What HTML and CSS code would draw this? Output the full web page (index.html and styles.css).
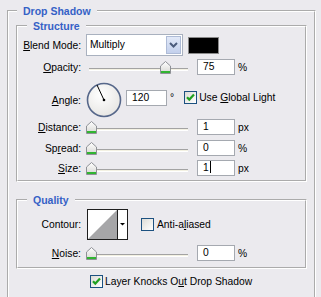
FILE: index.html
```html
<!DOCTYPE html>
<html lang="en">

<head>
	<meta charset="UTF-8">
	<title>Drop Shadow</title>
	<link rel="stylesheet" href="styles.css">
</head>

<body>
	<svg class="sprite" width="0" height="0">
		<defs>
			<linearGradient id="thumb-fill" x1="0" y1="0" x2="0" y2="1">
				<stop offset="0" stop-color="#ffffff" />
				<stop offset="1" stop-color="#d6d6d2" />
			</linearGradient>
			<radialGradient id="dial-fill" cx="0.4" cy="0.35" r="0.7">
				<stop offset="0" stop-color="#ffffff" />
				<stop offset="1" stop-color="#e6e5e2" />
			</radialGradient>
			<symbol id="thumb" viewBox="0 0 11 13">
				<path d="M0.5 5 L5.5 0.5 L10.5 5 L10.5 12.5 L0.5 12.5 Z" fill="url(#thumb-fill)" stroke="#8e9196" />
				<rect x="1" y="10" width="9" height="2" fill="#31b531" />
			</symbol>
			<symbol id="tick" viewBox="0 0 11 11">
				<path d="M2 5.2 L4.3 7.6 L9 2.6" fill="none" stroke="#21a121" stroke-width="2.2" />
			</symbol>
		</defs>
	</svg>

	<fieldset class="group outer">
		<legend>Drop Shadow</legend>
		<div class="outer-body">

			<fieldset class="group section structure">
				<legend>Structure</legend>

				<div class="row blend">
					<span class="lbl"><u>B</u>lend Mode:</span>
					<div class="select">
						<span class="select-value">Multiply</span>
						<span class="select-btn">
							<svg width="9" height="6" viewBox="0 0 9 6">
								<path d="M1 1 L4.5 4.5 L8 1" fill="none" stroke="#4c5c7c" stroke-width="2" />
							</svg>
						</span>
					</div>
					<span class="swatch"></span>
				</div>

				<div class="row opacity">
					<span class="lbl"><u>O</u>pacity:</span>
					<div class="slider">
						<span class="track"></span>
						<svg class="thumb" style="left:74px" width="11" height="13"><use href="#thumb" /></svg>
					</div>
					<span class="field">75</span>
					<span class="unit">%</span>
				</div>

				<div class="row angle">
					<span class="lbl"><u>A</u>ngle:</span>
					<svg class="dial" width="36" height="36" viewBox="0 0 36 36">
						<circle cx="18" cy="18" r="16.5" fill="url(#dial-fill)" stroke="#56678a" stroke-width="1.6" />
						<line x1="18" y1="18" x2="11" y2="3" stroke="#000" stroke-width="1" />
						<circle cx="18" cy="18" r="1.3" fill="#000" />
					</svg>
					<span class="field wide">120</span>
					<span class="deg">°</span>
					<span class="check on"><svg width="11" height="11"><use href="#tick" /></svg></span>
					<span class="check-text">Use <u>G</u>lobal Light</span>
				</div>

				<div class="row distance">
					<span class="lbl"><u>D</u>istance:</span>
					<div class="slider">
						<span class="track"></span>
						<svg class="thumb" style="left:0px" width="11" height="13"><use href="#thumb" /></svg>
					</div>
					<span class="field">1</span>
					<span class="unit">px</span>
				</div>

				<div class="row spread">
					<span class="lbl">Sp<u>r</u>ead:</span>
					<div class="slider">
						<span class="track"></span>
						<svg class="thumb" style="left:0px" width="11" height="13"><use href="#thumb" /></svg>
					</div>
					<span class="field">0</span>
					<span class="unit">%</span>
				</div>

				<div class="row size">
					<span class="lbl"><u>S</u>ize:</span>
					<div class="slider">
						<span class="track"></span>
						<svg class="thumb" style="left:0px" width="11" height="13"><use href="#thumb" /></svg>
					</div>
					<span class="field">1<span class="caret"></span></span>
					<span class="unit">px</span>
				</div>
			</fieldset>

			<fieldset class="group section quality">
				<legend>Quality</legend>

				<div class="row contour">
					<span class="lbl">Contour:</span>
					<svg class="contour-box" width="41" height="31" viewBox="0 0 41 31">
						<rect x="0.5" y="0.5" width="40" height="30" fill="#fff" stroke="#1e1e1e" />
						<polygon points="1,30 30,1 30,30" fill="#a6a6a8" />
						<line x1="30.5" y1="0" x2="30.5" y2="31" stroke="#1e1e1e" />
						<polygon points="33,14 38,14 35.5,16.5" fill="#000" />
					</svg>
					<span class="check aa"></span>
					<span class="check-text">Anti-a<u>l</u>iased</span>
				</div>

				<div class="row noise">
					<span class="lbl"><u>N</u>oise:</span>
					<div class="slider">
						<span class="track"></span>
						<svg class="thumb" style="left:0px" width="11" height="13"><use href="#thumb" /></svg>
					</div>
					<span class="field">0</span>
					<span class="unit">%</span>
				</div>
			</fieldset>

			<div class="row knock">
				<span class="check on"><svg width="11" height="11"><use href="#tick" /></svg></span>
				<span class="check-text">Layer Knocks O<u>u</u>t Drop Shadow</span>
			</div>

		</div>
	</fieldset>
</body>

</html>
```

FILE: styles.css
```css
* {
	box-sizing: border-box;
}

body {
	margin: 0;
	overflow: hidden;
	background: #ebeaee;
	color: #000;
	font-family: "Liberation Sans", Arial, sans-serif;
	font-size: 10.3px;
}

.sprite {
	position: absolute;
}

.group {
	margin: 0;
	padding: 0;
	min-width: 0;
	border: 2px groove #fff;
}

.group > legend {
	padding: 0 6px;
	line-height: 14px;
	font-size: 10.5px;
	font-weight: bold;
	color: #3561c6;
}

.outer {
	margin: 4px 5px 0 7px;
}

.outer > legend {
	margin-left: 8px;
}

.outer-body {
	padding: 1px 7px 30px;
}

.section > legend {
	margin-left: 9px;
}

.structure {
	padding-bottom: 4px;
}

.quality {
	margin-top: 11px;
	padding-bottom: 6px;
}

.row {
	display: flex;
	align-items: center;
}

.lbl {
	width: 63px;
	margin-right: 5px;
	text-align: right;
	white-space: nowrap;
}

.blend {
	height: 24px;
}

.opacity {
	height: 20px;
}

.angle {
	height: 38px;
	margin-top: 4px;
}

.distance {
	height: 16px;
}

.spread {
	height: 16px;
	margin-top: 5px;
}

.size {
	height: 16px;
	margin-top: 4px;
}

.contour {
	height: 35px;
}

.noise {
	height: 16px;
	margin-top: 3px;
}

.knock {
	height: 16px;
	margin-top: 4px;
	padding-left: 74px;
}

/* dropdown */
.select {
	display: flex;
	width: 97px;
	height: 22px;
	border: 1px solid #a9b1bf;
	background: #fff;
}

.select-value {
	flex: 1;
	padding-left: 3px;
	line-height: 20px;
}

.select-btn {
	display: flex;
	align-items: center;
	justify-content: center;
	width: 15px;
	margin: 1px;
	border: 1px solid #aebbd6;
	background: linear-gradient(#e2e9f8, #c3d0ec);
}

.swatch {
	width: 31px;
	height: 17px;
	margin-left: 5px;
	border: 1px solid #8a8a8a;
	background: #000;
}

/* sliders */
.slider {
	position: relative;
	width: 102px;
	height: 13px;
	margin-right: 9px;
}

.track {
	display: block;
	height: 3px;
	margin: 7px 0 0 3px;
	border-top: 1px solid #a3a3a3;
	border-bottom: 1px solid #fff;
	background: #f3f1e2;
}

.thumb {
	position: absolute;
	top: 0;
}

/* inputs */
.field {
	width: 38px;
	height: 16px;
	padding-left: 5px;
	border: 1px solid #a5a9b0;
	background: #fff;
	line-height: 14px;
}

.field.wide {
	width: 41px;
}

.caret {
	display: inline-block;
	width: 1px;
	height: 12px;
	margin-left: 1px;
	vertical-align: -2px;
	background: #000;
}

.unit {
	margin-left: 3px;
}

.dial {
	margin-right: 4px;
}

.deg {
	margin-left: 3px;
}

.angle .field,
.angle .deg,
.angle .check,
.angle .check-text {
	margin-bottom: 5px;
}

/* checkboxes */
.check {
	display: flex;
	align-items: center;
	justify-content: center;
	width: 13px;
	height: 13px;
	border: 1px solid #1c5180;
	background: linear-gradient(135deg, #dcdcd6, #fff);
}

.angle .check {
	margin-left: 10px;
}

.check-text {
	margin-left: 2px;
	white-space: nowrap;
}

.aa {
	margin-left: 13px;
}

.contour .check-text {
	margin-left: 3px;
}

.contour-box {
	margin-left: 1px;
}
```
